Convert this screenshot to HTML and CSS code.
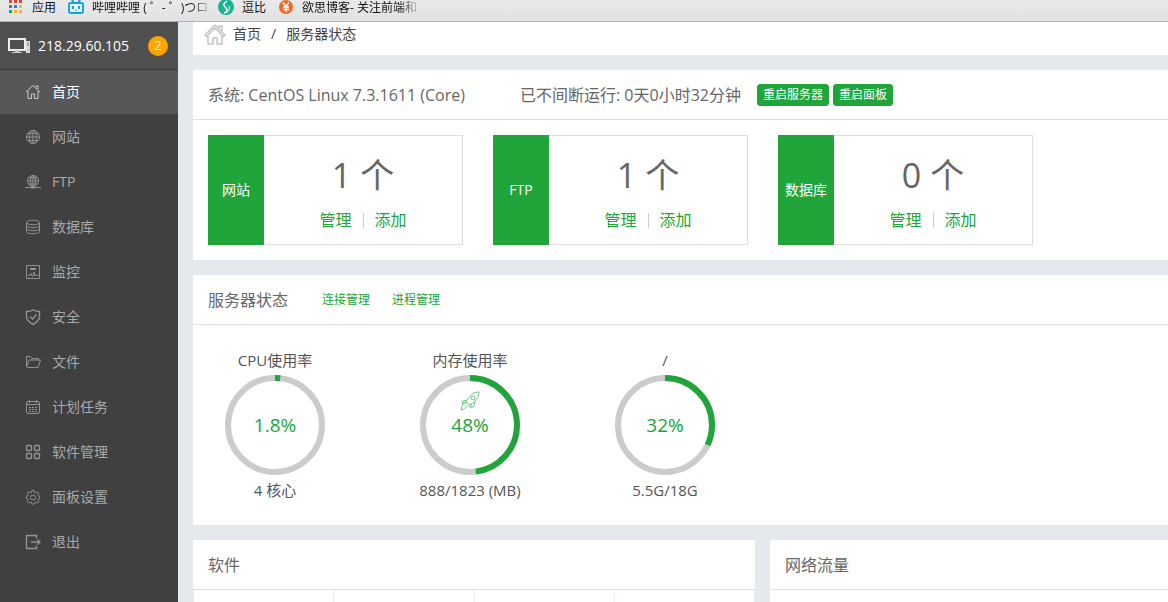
FILE: index.html
```html
<!DOCTYPE html>
<html lang="zh-CN">
<head>
<meta charset="utf-8">
<title>服务器状态</title>
<link rel="stylesheet" href="styles.css">
</head>
<body>
<nav class="bookmarks" aria-label="书签">
  <a class="bookmark bookmark-apps" href="#">
    <svg class="bookmark-icon" width="16" height="16" viewBox="0 0 16 16"><path fill="#ee4035" d="M1 0h3v3H1zM6 0h3v3H6zM11 0h3v3h-3z"/><path fill="#1fa35a" d="M1 5h3v3H1zM1 10h3v3H1z"/><path fill="#2b7de9" d="M6 5h3v3H6z"/><path fill="#f9b233" d="M11 5h3v3h-3zM6 10h3v3H6zM11 10h3v3h-3z"/></svg>
    <span>应用</span>
  </a>
  <a class="bookmark bookmark-bili" href="#">
    <svg class="bookmark-icon" width="16" height="16" viewBox="0 0 16 16"><path d="M4 0l2 3M12 0l-2 3" stroke="#12a4e0" stroke-width="2"/><rect x="1" y="3" width="14" height="10" rx="2" fill="#e9f6fb" stroke="#12a4e0" stroke-width="2"/><path d="M5 6v3M11 6v3" stroke="#12a4e0" stroke-width="2"/><path d="M7 10h2" stroke="#12a4e0"/></svg>
    <span class="bookmark-text">哔哩哔哩 ( ゜- ゜)つロ</span>
  </a>
  <a class="bookmark bookmark-doubi" href="#">
    <svg class="bookmark-icon" width="16" height="16" viewBox="0 0 16 16"><circle cx="8" cy="7" r="8" fill="#19b394"/><path d="M9 1c-4 3-4 4-1 7 2 2 1 4-2 5" fill="none" stroke="#fff" stroke-width="1.500"/><path d="M11 6c1 3 0 5-3 7" fill="none" stroke="#fff"/></svg>
    <span>逗比</span>
  </a>
  <a class="bookmark bookmark-blog" href="#">
    <svg class="bookmark-icon" width="16" height="16" viewBox="0 0 16 16"><circle cx="8" cy="7" r="7" fill="#ec6b24"/><path d="M5 2.500l3 4 3-4M8 6.500V12M5 7h6M5 9.500h6" fill="none" stroke="#fff" stroke-width="1.500"/></svg>
    <span class="bookmark-text">欲思博客- 关注前端和</span>
  </a>
</nav>

<div class="layout">
  <aside class="sidebar">
    <header class="host">
      <svg width="24" height="18" viewBox="0 0 24 18"><path d="M1 2h16v11H1z" fill="none" stroke="#eee" stroke-width="2"/><path d="M7 13h4v2h3v1H4v-1h3z" fill="#ccc"/><rect x="18" y="4" width="4" height="12" fill="#ddd"/><path d="M19 6h2M19 8h2" stroke="#777"/><path d="M19 13h2" stroke="#999"/></svg>
      <span class="host-ip">218.29.60.105</span>
      <span class="badge">2</span>
    </header>
    <nav class="menu">
      <a class="menu-item menu-item-active" href="#"><svg class="icon" viewBox="0 0 16 16"><path d="M1 8l7-6.500L15 8M3 7v7.500h3.500V10h3v4.500H13V7M11 3V2h2v3"/></svg>首页</a>
      <a class="menu-item" href="#"><svg class="icon" viewBox="0 0 16 16"><circle cx="8" cy="8" r="6.500"/><path d="M8 1.500v13M1.500 8h13M2.500 4.500h11M2.500 11.500h11"/><ellipse cx="8" cy="8" rx="3.500" ry="6.500"/></svg>网站</a>
      <a class="menu-item" href="#"><svg class="icon" viewBox="0 0 16 16"><circle cx="8" cy="7" r="5.500"/><path d="M8 1.500v11M2.500 7h11M3.500 4h9M3.500 10h9M0 13.500h16M6 14h4"/><ellipse cx="8" cy="7" rx="2.500" ry="5.500"/></svg>FTP</a>
      <a class="menu-item" href="#"><svg class="icon" viewBox="0 0 16 16"><ellipse cx="8" cy="3.500" rx="6.500" ry="2.300"/><path d="M1.500 3.500v9c0 3 13 3 13 0v-9M1.500 6.500c0 3 13 3 13 0M1.500 9.500c0 3 13 3 13 0"/></svg>数据库</a>
      <a class="menu-item" href="#"><svg class="icon" viewBox="0 0 16 16"><path d="M1.500 1.500h13v13h-13zM5 4.500h6M5 5.500h6M3 11.500h2l1-2 1.500 3L9 8l1 4 1-1.500 1 1h1.500"/></svg>监控</a>
      <a class="menu-item" href="#"><svg class="icon icon-bold" viewBox="0 0 16 16"><path d="M8 .7c2 1.500 4 1.800 6.500 1.800v5c0 4-3 6-6.500 7.800C4.500 13.500 1.500 11.500 1.500 7.500v-5C4 2.500 6 2.200 8 .7zM5 7.500l2.500 2.500L11.500 5.500"/></svg>安全</a>
      <a class="menu-item" href="#"><svg class="icon" viewBox="0 0 16 16"><path d="M1.500 13V2.500h4l1.500 2h6.500v2M1.500 13l2.500-7h11.500l-2.500 7.500H2z"/></svg>文件</a>
      <a class="menu-item" href="#"><svg class="icon" viewBox="0 0 16 16"><rect x="1.500" y="2.500" width="13" height="12" rx="1.500"/><path d="M1.500 5.500h13M4.500 1v3M11.500 1v3"/><path stroke-dasharray="2 1" d="M4 8.500h8M4 10.500h8M4 12.500h8"/></svg>计划任务</a>
      <a class="menu-item" href="#"><svg class="icon icon-bold" viewBox="0 0 16 16"><rect x="1.500" y="1.500" width="5" height="5" rx="1"/><rect x="9.500" y="1.500" width="5" height="5" rx="1"/><rect x="1.500" y="9.500" width="5" height="5" rx="1"/><rect x="9.500" y="9.500" width="5" height="5" rx="1"/></svg>软件管理</a>
      <a class="menu-item" href="#"><svg class="icon" viewBox="0 0 16 16"><path d="M6.900 1.500h2.200l.4 1.800 1.300.5 1.500-1 1.600 1.600-1 1.500.5 1.200 1.300.3v2.200l-1.300.3-.5 1.200 1 1.500-1.600 1.600-1.500-1-1.300.5-.4 1.300H6.900l-.4-1.300-1.300-.5-1.500 1-1.600-1.600 1-1.500-.5-1.200-1.300-.3V7.400l1.300-.3.500-1.200-1-1.500 1.600-1.600 1.500 1 1.300-.5z"/><circle cx="8" cy="8.500" r="2.500"/></svg>面板设置</a>
      <a class="menu-item" href="#"><svg class="icon icon-bold" viewBox="0 0 16 16"><path d="M11.500 4.500v-3h-10v13h10v-3M6 8h9M12.500 5.500L15 8l-2.500 2.500"/></svg>退出</a>
    </nav>
  </aside>

  <main class="content">
    <nav class="breadcrumb">
      <svg width="22" height="22" viewBox="0 0 22 22" fill="none" stroke="#c4c4c4" stroke-width="1.500"><path d="M1 12L11 2l10 10-1.500 1.500L11 5l-8.500 8.500zM4 13v8h5v-6h4v6h5v-8M15 5V3h3v5"/></svg>
      <a href="#">首页</a><span class="slash">/</span><span>服务器状态</span>
    </nav>

    <section class="panel">
      <header class="panel-head">
        <span class="system">系统: CentOS Linux 7.3.1611 (Core)</span>
        <span class="uptime">已不间断运行: 0天0小时32分钟</span>
        <div class="actions"><button class="btn" type="button">重启服务器</button><button class="btn" type="button">重启面板</button></div>
      </header>
      <div class="stats">
        <article class="stat"><h3 class="stat-name">网站</h3><div class="stat-body"><p class="stat-count">1 个</p><p class="stat-links"><a href="#">管理</a><i class="divider"></i><a href="#">添加</a></p></div></article>
        <article class="stat"><h3 class="stat-name">FTP</h3><div class="stat-body"><p class="stat-count">1 个</p><p class="stat-links"><a href="#">管理</a><i class="divider"></i><a href="#">添加</a></p></div></article>
        <article class="stat"><h3 class="stat-name">数据库</h3><div class="stat-body"><p class="stat-count">0 个</p><p class="stat-links"><a href="#">管理</a><i class="divider"></i><a href="#">添加</a></p></div></article>
      </div>
    </section>

    <section class="panel">
      <header class="panel-head">
        <h2 class="panel-title">服务器状态</h2>
        <div class="panel-links"><a href="#">连接管理</a><a href="#">进程管理</a></div>
      </header>
      <div class="gauges">
        <div class="gauge">
          <span>CPU使用率</span>
          <div class="ring"><svg class="ring-arc" viewBox="0 0 100 100"><circle class="ring-track" cx="50" cy="50" r="47"/><circle class="ring-value" cx="50" cy="50" r="47" pathLength="100" stroke-dasharray="1.800 100"/></svg><strong class="ring-text">1.8%</strong></div>
          <span>4 核心</span>
        </div>
        <div class="gauge">
          <span>内存使用率</span>
          <div class="ring"><svg class="ring-arc" viewBox="0 0 100 100"><circle class="ring-track" cx="50" cy="50" r="47"/><circle class="ring-value" cx="50" cy="50" r="47" pathLength="100" stroke-dasharray="48 100"/></svg><svg class="rocket" viewBox="0 0 20 20"><path d="M19 1c-6 0-9 3-13 10l4 3c6-4 9-7 9-13zM7 9L3 10 2 13l4-2M11 13v4l3-2 1-5M5 12c-3 1-3 3-4 7 3-1 5-2 6-4M8 15l2 1"/><circle cx="13" cy="7" r="2"/></svg><strong class="ring-text">48%</strong></div>
          <span>888/1823 (MB)</span>
        </div>
        <div class="gauge">
          <span>/</span>
          <div class="ring"><svg class="ring-arc" viewBox="0 0 100 100"><circle class="ring-track" cx="50" cy="50" r="47"/><circle class="ring-value" cx="50" cy="50" r="47" pathLength="100" stroke-dasharray="32 100"/></svg><strong class="ring-text">32%</strong></div>
          <span>5.5G/18G</span>
        </div>
      </div>
    </section>

    <div class="columns">
      <section class="panel software">
        <header class="panel-head"><h2 class="panel-title">软件</h2></header>
        <div class="slots"><div class="slot"></div><div class="slot"></div><div class="slot"></div><div class="slot"></div></div>
      </section>
      <section class="panel traffic">
        <header class="panel-head"><h2 class="panel-title">网络流量</h2></header>
      </section>
    </div>
  </main>
</div>
</body>
</html>
```

FILE: styles.css
```css
* {
  box-sizing: border-box;
}

body {
  display: flex;
  flex-direction: column;
  height: 100vh;
  margin: 0;
  overflow: hidden;
  background: #e5e9ed;
  color: #666;
  font: 14px/20px "Open Sans", "Noto Sans CJK SC", sans-serif;
}

a {
  color: inherit;
  text-decoration: none;
}

h2, h3, p {
  margin: 0;
  font-weight: 400;
}

/* Bookmarks bar */
.bookmarks {
  display: flex;
  flex: none;
  gap: 14px;
  height: 22px;
  padding-left: 8px;
  border-bottom: 1px solid #b4b4b4;
  background: linear-gradient(#e9e9e9, #e2e2e2);
  color: #111;
  font-size: 12px;
  line-height: 16px;
}

.bookmark {
  display: flex;
  gap: 8px;
  white-space: nowrap;
}

.bookmark-apps {
  margin-right: -2px;
}

.bookmark-icon {
  flex: none;
}

.bookmark-text {
  mask-image: linear-gradient(to right, #000 84%, rgba(0, 0, 0, 0.2));
}

.bookmark-bili {
  width: 136px;
}

.bookmark-blog {
  margin-left: -2px;
}

/* Sidebar */
.layout {
  display: flex;
  flex: 1;
  min-height: 0;
}

.sidebar {
  flex: none;
  width: 178px;
  background: #404040;
}

.host {
  display: flex;
  align-items: center;
  gap: 6px;
  height: 48px;
  padding: 0 10px 0 8px;
  border-bottom: 1px solid #3b3b3b;
  background: #505050;
  color: #fff;
}

.badge {
  width: 20px;
  margin-left: auto;
  border-radius: 50%;
  background: #ffa500;
  font-size: 12px;
  text-align: center;
}

.menu-item {
  display: flex;
  align-items: center;
  gap: 11px;
  height: 45px;
  padding-left: 25px;
  color: #a9a9a9;
}

.menu-item-active {
  height: 44px;
  background: #575757;
  color: #fff;
}

.icon {
  width: 16px;
  height: 16px;
  fill: none;
  stroke: #929292;
  stroke-width: 1;
}

.menu-item-active .icon {
  stroke: #ccc;
}

.icon-bold {
  stroke-width: 1.4;
}

/* Content */
.content {
  display: flex;
  flex: 1;
  flex-direction: column;
  gap: 15px;
  min-width: 0;
  padding-left: 15px;
}

.breadcrumb {
  display: flex;
  align-items: center;
  height: 33px;
  padding: 0 11px 9px;
  background: #fff;
  color: #444;
}

.breadcrumb svg {
  margin-right: 7px;
}

.slash {
  margin: 0 10px;
}

.panel {
  background: #fff;
}

.panel-head {
  display: flex;
  align-items: center;
  height: 50px;
  padding: 0 15px;
  border-bottom: 1px solid #ddd;
  font-size: 16px;
  white-space: nowrap;
}

.panel-title {
  font-size: 16px;
}

.uptime {
  margin-left: 55px;
}

.actions {
  display: flex;
  gap: 4px;
  margin-left: 16px;
}

.btn {
  height: 22px;
  padding: 0 5px;
  border: 1px solid #20a53a;
  border-radius: 3px;
  background: #20a53a;
  color: #fff;
  font: inherit;
  font-size: 12px;
  line-height: 20px;
}

.stats {
  display: flex;
  gap: 30px;
  padding: 15px;
}

.stat {
  display: flex;
  width: 255px;
  height: 110px;
}

.stat-name {
  display: grid;
  place-items: center;
  width: 56px;
  background: #20a53a;
  color: #fff;
  font-size: 14px;
}

.stat-body {
  flex: 1;
  padding: 14px 0;
  border: 1px solid #ddd;
  border-left: 0;
  text-align: center;
}

.stat-count {
  font-size: 34px;
  line-height: 50px;
}

.stat-links {
  display: flex;
  align-items: center;
  justify-content: center;
  gap: 11px;
  margin-top: 10px;
  color: #20a53a;
  font-size: 16px;
}

.divider {
  width: 1px;
  height: 15px;
  background: #ccc;
}

.panel-links {
  display: flex;
  gap: 22px;
  margin-left: 34px;
  color: #20a53a;
  font-size: 12px;
}

.gauges {
  display: flex;
  gap: 45px;
  height: 200px;
  padding: 25px 7px;
}

.gauge {
  display: flex;
  flex-direction: column;
  align-items: center;
  gap: 5px;
  width: 150px;
  color: #555;
  font-size: 15px;
}

.ring {
  display: grid;
  flex: none;
  place-items: center;
  position: relative;
  width: 100px;
  height: 100px;
}

.ring-arc {
  position: absolute;
  inset: 0;
  fill: none;
  stroke-width: 6;
  transform: rotate(-90deg);
}

.ring-track {
  stroke: #ccc;
}

.ring-value {
  stroke: #20a53a;
}

.ring-text {
  color: #20a53a;
  font-size: 19px;
  font-weight: 400;
}

.rocket {
  position: absolute;
  top: 16px;
  left: 40px;
  width: 20px;
  height: 20px;
  fill: none;
  stroke: #6cc67d;
}

.columns {
  display: flex;
  flex: 1;
  gap: 15px;
}

.software {
  display: flex;
  flex-direction: column;
  width: 562px;
}

.traffic {
  flex: 1;
}

.slots {
  display: grid;
  flex: 1;
  grid-template-columns: repeat(4, 1fr);
  border-left: 1px solid #ece9f8;
}

.slot {
  border-right: 1px solid #ece9f8;
}
```
